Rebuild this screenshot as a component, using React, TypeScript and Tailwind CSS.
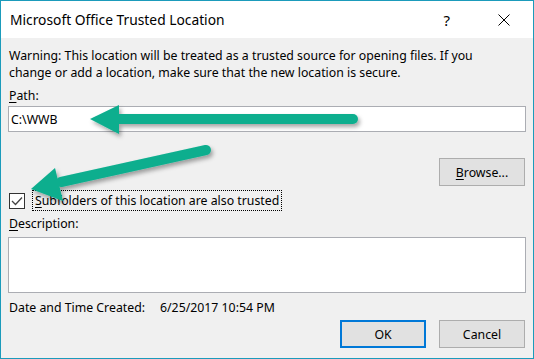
import React from "react";

const font = { fontFamily: '"Segoe UI", "Noto Sans", "Open Sans", sans-serif' };

function Arrows() {
  return (
    <svg className="pointer-events-none absolute left-0 top-0" width="534" height="359" viewBox="0 0 534 359">
      <defs>
        <filter id="sh" x="-20%" y="-50%" width="140%" height="200%">
          <feDropShadow dx="2" dy="3" stdDeviation="2" floodColor="#000" floodOpacity="0.35" />
        </filter>
      </defs>
      <g filter="url(#sh)" fill="#0aae8e" stroke="#0aae8e">
        <line x1="352" y1="118" x2="112" y2="118" strokeWidth="10" strokeLinecap="round" />
        <polygon points="89,118 118,104 118,133" stroke="none" />
        <line x1="205" y1="149" x2="60" y2="181" strokeWidth="10" strokeLinecap="round" />
        <polygon points="30,188 54,167 62,200" stroke="none" />
      </g>
    </svg>
  );
}

export default function App() {
  return (
    <div
      className="relative flex h-[359px] w-[534px] flex-col overflow-hidden border border-[#1b9bbb] bg-[#f0f0f0] text-[12.3px] leading-[17px] text-black"
      style={font}
    >
      <div className="flex h-[37px] shrink-0 items-center bg-white pl-[9px] pr-[23px]">
        <span className="text-[13.8px] leading-[20px]">Microsoft Office Trusted Location</span>
        <span className="ml-auto text-[15px] leading-[20px]">?</span>
        <svg className="ml-[48px]" width="12" height="12" viewBox="0 0 12 12">
          <path d="M0.5 0.5 L11.5 11.5 M11.5 0.5 L0.5 11.5" stroke="#000" strokeWidth="1" fill="none" />
        </svg>
      </div>

      <div className="flex flex-1 flex-col px-[7px]">
        <p className="mt-[9px] whitespace-nowrap pl-[1px]">
          Warning: This location will be treated as a trusted source for opening files. If you
          <br />
          change or add a location, make sure that the new location is secure.
        </p>
        <p className="mt-[6px] pl-[1px]">
          <span className="underline underline-offset-2">P</span>ath:
        </p>
        <div className="mt-[2px] flex h-[26px] items-center border border-[#abadb3] bg-white px-[2px]">
          C:\WWB
        </div>

        <div className="mt-[26px] flex justify-end pr-[1px]">
          <button className="h-[28px] w-[86px] border border-[#adadad] bg-[#e1e1e1]">
            <span className="underline underline-offset-2">B</span>rowse...
          </button>
        </div>

        <div className="mt-[4px] flex h-[21px] items-center">
          <div className="ml-[1px] flex h-[16px] w-[16px] items-center justify-center border border-[#333] bg-white">
            <svg width="12" height="10" viewBox="0 0 12 10">
              <path d="M1 5 L4.5 8.5 L11 1.5" stroke="#444" strokeWidth="1.3" fill="none" />
            </svg>
          </div>
          <div className="ml-[7px] flex h-[21px] items-center border border-dotted border-black px-[2px]">
            <span className="underline underline-offset-2">S</span>ubfolders of this location are also trusted
          </div>
        </div>

        <p className="mt-[4px] pl-[1px]">
          <span className="underline underline-offset-2">D</span>escription:
        </p>
        <div className="mt-[5px] h-[56px] border border-[#abadb3] bg-white" />

        <div className="mt-[6px] flex pl-[1px]">
          <span className="w-[151px]">Date and Time Created:</span>
          <span>6/25/2017 10:54 PM</span>
        </div>

        <div className="mt-[4px] flex justify-end gap-[13px] pr-[1px]">
          <button className="h-[28px] w-[86px] border-2 border-[#0078d7] bg-[#e1e1e1]">OK</button>
          <button className="h-[28px] w-[86px] border border-[#adadad] bg-[#e1e1e1]">Cancel</button>
        </div>
      </div>

      <Arrows />
    </div>
  );
}
